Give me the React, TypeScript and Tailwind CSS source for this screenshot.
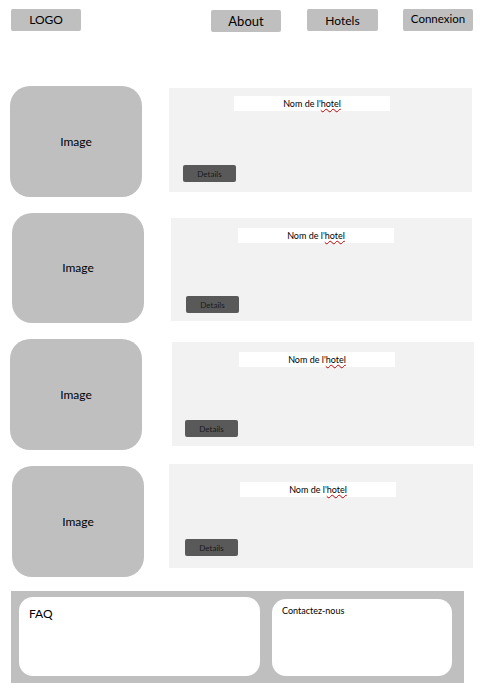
import React from 'react';

interface HotelRow {
  row: string;
  image: string;
  card: string;
  title: string;
  details: string;
}

// each row keeps the small offsets of the mockup
const rows: HotelRow[] = [
  {
    row: 'h-[127px]',
    image: 'ml-[10px] mt-0 h-[111px]',
    card: 'ml-[27px] mt-[2px] w-[303px] h-[104px]',
    title: 'ml-[65px] mt-[8px]',
    details: 'ml-[14px] mt-[54px]',
  },
  {
    row: 'h-[126px]',
    image: 'ml-[12px] mt-0 h-[110px]',
    card: 'ml-[27px] mt-[5px] w-[301px] h-[103px]',
    title: 'ml-[67px] mt-[10px]',
    details: 'ml-[15px] mt-[53px]',
  },
  {
    row: 'h-[125px]',
    image: 'ml-[10px] mt-0 h-[111px]',
    card: 'ml-[30px] mt-[3px] w-[302px] h-[104px]',
    title: 'ml-[67px] mt-[10px]',
    details: 'ml-[13px] mt-[53px]',
  },
  {
    row: 'h-[127px]',
    image: 'ml-[12px] mt-[2px] h-[111px]',
    card: 'ml-[25px] mt-0 w-[304px] h-[104px]',
    title: 'ml-[71px] mt-[18px]',
    details: 'ml-[16px] mt-[42px]',
  },
];

function HotelCard({ r }: { r: HotelRow }) {
  return (
    <div className={`flex items-start ${r.row}`}>
      <div
        className={`flex w-[132px] shrink-0 items-center justify-center rounded-[20px] bg-[#bfbfbf] text-[12px] text-black ${r.image}`}
      >
        Image
      </div>
      <div className={`flex shrink-0 flex-col items-start bg-[#f2f2f2] ${r.card}`}>
        <div
          className={`flex h-[15px] w-[156px] items-center justify-center bg-white text-[9px] leading-none text-black ${r.title}`}
        >
          Nom de l'
          <span className="underline decoration-wavy decoration-[#c00000] decoration-1 underline-offset-1">
            hotel
          </span>
        </div>
        <button
          className={`flex h-[17px] w-[53px] items-center justify-center rounded-[2px] bg-[#595959] text-[8px] text-[#1a1a1a] ${r.details}`}
        >
          Details
        </button>
      </div>
    </div>
  );
}

export default function App() {
  return (
    <div className="h-[690px] w-[480px] overflow-hidden bg-white font-['Lato','Open_Sans',sans-serif] text-black">
      <div className="flex h-[86px] items-start">
        <div className="ml-[11px] mt-[9px] flex h-[22px] w-[70px] items-center justify-center rounded-[2px] bg-[#bfbfbf] text-[12px]">
          LOGO
        </div>
        <button className="ml-[130px] mt-[10px] flex h-[22px] w-[70px] items-center justify-center rounded-[2px] bg-[#bfbfbf] pt-[2px] text-[13px]">
          About
        </button>
        <button className="ml-[26px] mt-[9px] flex h-[22px] w-[71px] items-center justify-center rounded-[2px] bg-[#bfbfbf] pt-[1px] text-[12px]">
          Hotels
        </button>
        <button className="ml-[25px] mt-[9px] flex h-[22px] w-[70px] items-center justify-center rounded-[2px] bg-[#bfbfbf] pb-[2px] text-[11.5px]">
          Connexion
        </button>
      </div>

      {rows.map((r, i) => (
        <HotelCard key={i} r={r} />
      ))}

      <div className="ml-[11px] flex h-[92px] w-[453px] items-start gap-[12px] bg-[#bfbfbf] pl-[8px] pt-[6px]">
        <div className="h-[79px] w-[241px] rounded-[14px] bg-white px-[10px] pt-[8px] text-[12px]">FAQ</div>
        <div className="mt-[2px] h-[77px] w-[180px] rounded-[14px] bg-white px-[10px] pt-[5px] text-[9px]">
          Contactez-nous
        </div>
      </div>
    </div>
  );
}
